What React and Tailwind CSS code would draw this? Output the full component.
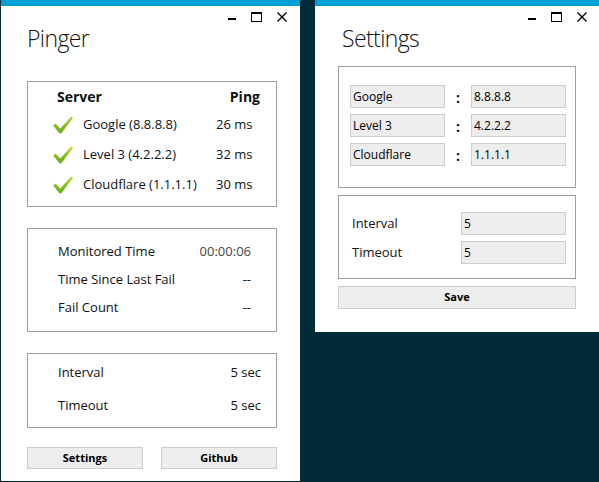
import React from 'react';

const font = "font-['Open_Sans',sans-serif]";

function WindowControls({ className }) {
    return (
        <div className={`flex items-start gap-[15px] mt-[6px] ${className}`}>
            <svg width="8" height="10" viewBox="0 0 8 10">
                <rect x="0" y="6" width="8" height="2" fill="#000" />
            </svg>
            <svg width="11" height="10" viewBox="0 0 11 10">
                <rect x="0.5" y="0.5" width="10" height="9" fill="none" stroke="#000" />
                <rect x="0" y="0" width="11" height="2" fill="#000" />
            </svg>
            <svg width="10" height="10" viewBox="0 0 10 10">
                <path d="M0.5 0.5 L9.5 9.5 M9.5 0.5 L0.5 9.5" stroke="#000" strokeWidth="1.4" />
            </svg>
        </div>
    );
}

function Check() {
    return (
        <svg width="20" height="18" viewBox="0 0 20 18" className="shrink-0">
            <defs>
                <linearGradient id="chk" x1="0" y1="0" x2="0" y2="1">
                    <stop offset="0" stopColor="#b4da34" />
                    <stop offset="1" stopColor="#68a91b" />
                </linearGradient>
            </defs>
            <polygon points="0,9.5 2.6,7.6 7.2,12.6 18.2,0.6 20,1.8 8.4,17.2 6.4,17.2" fill="url(#chk)" />
        </svg>
    );
}

const servers = [
    { name: 'Google (8.8.8.8)', ping: '26 ms' },
    { name: 'Level 3 (4.2.2.2)', ping: '32 ms' },
    { name: 'Cloudflare (1.1.1.1)', ping: '30 ms' },
];

const settingsRows = [
    { name: 'Google', ip: '8.8.8.8' },
    { name: 'Level 3', ip: '4.2.2.2' },
    { name: 'Cloudflare', ip: '1.1.1.1' },
];

export default function App() {
    const box = 'border border-[#a0a0a0]';
    const field = 'h-[23px] bg-[#ededed] border border-[#cccccc] px-[2px] flex items-center text-[12px] text-black';
    const button = 'h-[22px] bg-[#ededed] border border-[#cccccc] flex items-center justify-center text-[11px] font-bold text-black';
    const title = 'mt-[16px] text-[23px] leading-[32px] font-light tracking-[-0.6px]';

    return (
        <div className={`w-[599px] h-[482px] bg-[#012b39] flex items-start overflow-hidden ${font} text-[#111]`}>
            {/* PINGER */}
            <div className="ml-[1px] w-[299px] h-[481px] bg-white flex flex-col">
                <div className="h-[6px] bg-[#00a1d6]" />
                <div className="flex justify-between items-start">
                    <h1 className={`ml-[26px] ${title}`}>Pinger</h1>
                    <WindowControls className="mr-[13px]" />
                </div>

                <div className={`ml-[26px] mr-[23px] mt-[27px] pb-[6px] ${box}`}>
                    <div className="flex justify-between items-center h-[28px] pl-[29px] pr-[16px] text-[14px] font-bold">
                        <span>Server</span>
                        <span>Ping</span>
                    </div>
                    {servers.map(s => (
                        <div key={s.name} className="flex items-center h-[30px] pl-[25px] text-[13px]">
                            <Check />
                            <span className="ml-[10px] w-[133px]">{s.name}</span>
                            <span>{s.ping}</span>
                        </div>
                    ))}
                </div>

                <div className={`ml-[26px] mr-[23px] mt-[21px] py-[9px] pl-[30px] pr-[25px] text-[13px] ${box}`}>
                    {[
                        ['Monitored Time', '00:00:06'],
                        ['Time Since Last Fail', '--'],
                        ['Fail Count', '--'],
                    ].map(([k, v]) => (
                        <div key={k} className="flex justify-between items-center h-[28px]">
                            <span>{k}</span>
                            <span className={v === '--' ? '' : 'text-[#444]'}>{v}</span>
                        </div>
                    ))}
                </div>

                <div className={`ml-[26px] mr-[23px] mt-[21px] pt-[4px] pb-[6px] pl-[30px] pr-[15px] flex flex-col gap-[3px] text-[13px] ${box}`}>
                    <div className="flex justify-between items-center h-[30px]">
                        <span>Interval</span>
                        <span>5 sec</span>
                    </div>
                    <div className="flex justify-between items-center h-[30px]">
                        <span>Timeout</span>
                        <span>5 sec</span>
                    </div>
                </div>

                <div className="ml-[26px] mr-[23px] mt-[19px] flex gap-[18px]">
                    <div className={`flex-1 ${button}`}>Settings</div>
                    <div className={`flex-1 ${button}`}>Github</div>
                </div>
            </div>

            {/* SETTINGS */}
            <div className="ml-[15px] w-[284px] h-[332px] bg-white flex flex-col">
                <div className="h-[6px] bg-[#00a1d6]" />
                <div className="flex justify-between items-start">
                    <h1 className={`ml-[27px] ${title}`}>Settings</h1>
                    <WindowControls className="mr-[12px]" />
                </div>

                <div className={`mx-[23px] mt-[12px] pt-[18px] pb-[21px] pl-[11px] pr-[9px] flex flex-col gap-[6px] ${box}`}>
                    {settingsRows.map(r => (
                        <div key={r.name} className="flex items-start h-[23px]">
                            <div className={`w-[95px] ${field}`}>{r.name}</div>
                            <div className="w-[26px] h-[23px] pt-[3px] flex justify-center text-[14px] font-bold leading-[20px]">:</div>
                            <div className={`w-[95px] ${field}`}>{r.ip}</div>
                        </div>
                    ))}
                </div>

                <div className={`mx-[23px] mt-[7px] pt-[16px] pb-[14px] pl-[13px] pr-[9px] flex flex-col gap-[6px] text-[13px] ${box}`}>
                    <div className="flex items-center">
                        <span className="w-[109px]">Interval</span>
                        <div className={`flex-1 ${field}`}>5</div>
                    </div>
                    <div className="flex items-center">
                        <span className="w-[109px]">Timeout</span>
                        <div className={`flex-1 ${field}`}>5</div>
                    </div>
                </div>

                <div className={`mx-[23px] mt-[7px] h-[23px] ${button}`}>Save</div>
            </div>
        </div>
    );
}
